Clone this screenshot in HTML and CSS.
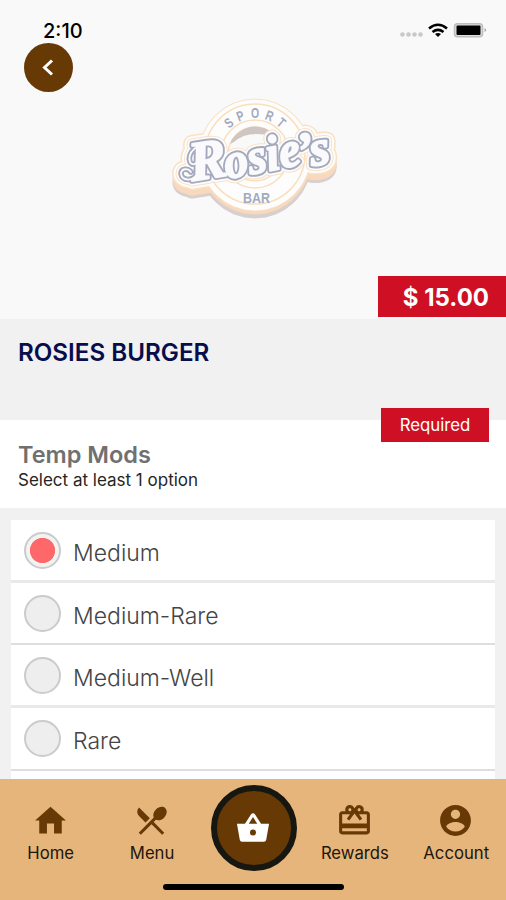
FILE: index.html
```html
<!DOCTYPE html>
<html lang="en">
<head>
<meta charset="utf-8">
<title>Rosies Burger</title>
<link rel="stylesheet" href="styles.css">
</head>
<body>
<div class="screen">
  <header class="hero">
    <div class="status">
      <span class="time">2:10</span>
      <svg class="signals" width="88" height="18" viewBox="0 0 88 18">
        <g fill="#c9c9c9"><circle cx="3.500" cy="11.500" r="2.300"/><circle cx="9.500" cy="11.500" r="2.300"/><circle cx="15.500" cy="11.500" r="2.300"/><circle cx="21.500" cy="11.500" r="2.300"/></g>
        <g fill="none" stroke="#000" stroke-width="2.500"><path d="M30 5.500Q39 -2 48 5.500"/><path d="M33.500 9Q39 4.700 44.500 9"/></g>
        <path d="M36 11Q39 9 42 11L39 14Z"/>
        <rect x="55.500" y="0.800" width="28" height="13" rx="3" fill="#e0e0e0" stroke="#bdbdbd" stroke-width="1.500"/>
        <rect x="57.500" y="2.500" width="24" height="9.500" rx="1"/>
        <path d="M85.500 5Q89 7 85.500 9Z" fill="#aaa"/>
      </svg>
    </div>
    <button class="back" aria-label="Back"><svg width="49" height="49" viewBox="0 0 49 49"><path d="M28 17.500L20.500 24.500L28 31.500" fill="none" stroke="#fff" stroke-width="3"/></svg></button>
    <svg class="logo" width="190" height="145" viewBox="0 0 190 145">
      <defs>
        <g id="name" class="script">
          <text font-size="56" x="32" y="96" transform="rotate(-9 32 96)">R</text>
          <text font-size="50" x="67" y="94" textLength="77" lengthAdjust="spacingAndGlyphs" transform="rotate(-11 67 94)">osie</text>
          <text font-size="50" x="139" y="83" textLength="33" lengthAdjust="spacingAndGlyphs" transform="rotate(-9 139 83)">’s</text>
        </g>
        <path id="flourish" d="M52 59C37 57 27 68 30 77C33 82 38 78 38 73M38 88C32 98 22 95 21 89C21 83 28 83 31 87"/>
      </defs>
      <g class="shadow"><circle cx="95" cy="77" r="56"/><use href="#name" y="9"/><use href="#flourish" y="9"/></g>
      <g class="edge"><circle cx="95" cy="73" r="56"/><use href="#name" y="6"/><use href="#flourish" y="6"/></g>
      <g class="outline"><circle cx="95" cy="70" r="56"/><use href="#name"/><use href="#flourish"/></g>
      <g class="plate"><circle cx="95" cy="70" r="55"/><use href="#name"/><use href="#flourish"/></g>
      <circle class="ring" cx="95" cy="69" r="50"/>
      <circle class="ring" cx="95" cy="69" r="34"/>
      <circle class="hole" cx="95" cy="69" r="27"/>
      <path d="M70 59A27 27 0 0 1 110 46L107 50Q86 46 74 57Z" fill="#cfc5c2"/>
      <g class="small" text-anchor="middle">
        <text transform="rotate(-40 95 69) translate(95 33) scale(.75 1)">S</text>
        <text transform="rotate(-21 95 69) translate(95 33) scale(.75 1)">P</text>
        <text transform="translate(95 33) scale(.75 1)">O</text>
        <text transform="rotate(21 95 69) translate(95 33) scale(.75 1)">R</text>
        <text transform="rotate(40 95 69) translate(95 33) scale(.75 1)">T</text>
      </g>
      <g class="halo-line"><use href="#name"/><use href="#flourish"/></g>
      <g class="halo"><use href="#name"/><use href="#flourish"/></g>
      <g class="line"><use href="#name"/><use href="#flourish"/></g>
      <g class="front"><use href="#name"/><use href="#flourish"/></g>
      <text class="small bar" x="83" y="118" textLength="27" lengthAdjust="spacingAndGlyphs">BAR</text>
    </svg>
    <div class="price">$ 15.00</div>
  </header>
  <section class="item"><h1>ROSIES BURGER</h1></section>
  <section class="group">
    <div class="required">Required</div>
    <h2>Temp Mods</h2>
    <p>Select at least 1 option</p>
  </section>
  <ul class="options">
    <li><span class="radio on"></span><span>Medium</span></li>
    <li><span class="radio"></span><span>Medium-Rare</span></li>
    <li><span class="radio"></span><span>Medium-Well</span></li>
    <li><span class="radio"></span><span>Rare</span></li>
    <li></li>
  </ul>
  <nav class="tabs">
    <a><svg viewBox="0 0 24 24"><path d="M9.700 20.500v-6.500h4.600v6.500h5v-8.500H22L12 3 2 12h2.700v8.500z"/></svg><span>Home</span></a>
    <a><svg viewBox="0 0 24 24"><path d="M8.100 13.340l2.830-2.830L3.910 3.500a4.008 4.008 0 0 0 0 5.660l4.190 4.180zm6.780-1.810c1.530.71 3.680.21 5.270-1.380 1.910-1.910 2.280-4.650.81-6.120-1.460-1.460-4.200-1.100-6.120.81-1.590 1.590-2.090 3.740-1.380 5.270L3.700 19.870l1.410 1.410L12 14.410l6.880 6.880 1.410-1.410L13.410 13l1.470-1.470z"/></svg><span>Menu</span></a>
    <a class="basket" aria-label="Basket"><svg viewBox="0 0 36 32"><path fill-rule="evenodd" d="M1 12H9.500L15.800 2.200Q18 -.3 20.200 2.200L26.500 12H35L32 29Q31.700 31 29.500 31H6.500Q4.300 31 4 29ZM13.500 12H22.500L18 5ZM18 18A3.200 3.200 0 1 0 18 24.400A3.200 3.200 0 1 0 18 18Z"/></svg></a>
    <a><svg viewBox="0 0 24 24"><path d="M20 6h-2.180c.11-.31.18-.65.18-1a2.996 2.996 0 0 0-5.500-1.650l-.5.67-.5-.68C10.960 2.540 10.050 2 9 2 7.340 2 6 3.340 6 5c0 .35.070.69.180 1H4c-1.110 0-1.990.89-1.990 2L2 19c0 1.110.89 2 2 2h16c1.110 0 2-.89 2-2V8c0-1.110-.89-2-2-2zm-5-2c.55 0 1 .45 1 1s-.45 1-1 1-1-.45-1-1 .45-1 1-1zM9 4c.55 0 1 .45 1 1s-.45 1-1 1-1-.45-1-1 .45-1 1-1zm11 15H4v-2h16v2zm0-5H4V8h5.080L7 10.830 8.620 12 11 8.760l1-1.360 1 1.360L15.380 12 17 10.830 14.920 8H20v6z"/></svg><span>Rewards</span></a>
    <a><svg viewBox="0 0 24 24"><path d="M12 2C6.480 2 2 6.480 2 12s4.480 10 10 10 10-4.480 10-10S17.520 2 12 2zm0 3c1.660 0 3 1.340 3 3s-1.340 3-3 3-3-1.340-3-3 1.340-3 3-3zm0 14.200c-2.500 0-4.710-1.280-6-3.220.030-1.990 4-3.080 6-3.080 1.990 0 5.970 1.090 6 3.080-1.290 1.940-3.500 3.220-6 3.220z"/></svg><span>Account</span></a>
    <div class="indicator"></div>
  </nav>
</div>
</body>
</html>
```
FILE: styles.css
```css
* { box-sizing: border-box; }
body { margin: 0; font-family: Inter, "Liberation Sans", sans-serif; }
.screen { width: 506px; height: 900px; display: flex; flex-direction: column; overflow: hidden; background: #f1f1f1; }
.hero { position: relative; flex: 0 0 319px; background: #f9f9f9; }
.status { display: flex; justify-content: space-between; padding: 18px 19px 0 43px; height: 43px; }
.time { font-size: 20px; line-height: 26px; font-weight: 500; }
.signals { margin-top: 5px; }
.back { display: block; width: 49px; height: 49px; margin-left: 24px; padding: 0; border: 0; border-radius: 50%; background: #673a05; }
.logo { position: absolute; left: 160px; top: 85px; }
.price { position: absolute; right: 0; bottom: 2px; width: 128px; height: 41px; padding-right: 17px; background: #cf1024; color: #fff; font-size: 24px; line-height: 43px; font-weight: 700; text-align: right; }
.logo g { stroke-linejoin: round; stroke-linecap: round; }
.script { font-family: "Liberation Serif", serif; font-style: italic; font-weight: bold; }
.shadow { fill: #d8d0cf; stroke: #d8d0cf; stroke-width: 17; }
.edge { fill: #f8d9bd; stroke: #f8d9bd; stroke-width: 17; }
.outline { fill: #fae1c3; stroke: #fae1c3; stroke-width: 18; }
.plate { fill: #fdfdfd; stroke: #fdfdfd; stroke-width: 15; }
.shadow circle, .edge circle, .outline circle, .plate circle { stroke-width: 1; }
#flourish { fill: none; }
.ring { fill: none; stroke: #fadfbd; stroke-width: 1.5; }
.hole { fill: #f9f9f9; stroke: #fadfbd; stroke-width: 1.5; }
.halo-line { fill: #fae1c3; stroke: #fae1c3; stroke-width: 11; }
.halo { fill: #fdfdfd; stroke: #fdfdfd; stroke-width: 9; }
.line { fill: #a4a9bd; stroke: #a4a9bd; stroke-width: 5.6; }
.front { fill: #fafafc; stroke: #fafafc; stroke-width: 1.8; }
.small { font-family: "Liberation Sans", sans-serif; font-size: 14px; font-weight: bold; fill: #a4a9bd; }
.bar { font-size: 15.5px; }
.item { flex: 0 0 101px; padding: 19px 18px; }
h1 { margin: 0; font-size: 24.2px; line-height: 30px; font-weight: 600; color: #080d4c; }
.group { position: relative; flex: 0 0 88px; padding: 20px 18px 0; background: #fff; }
.required { position: absolute; right: 17px; top: -12px; width: 108px; height: 34px; background: #cf1024; color: #fff; font-size: 16.8px; line-height: 35px; text-align: center; }
h2 { margin: 0; font-size: 23.5px; line-height: 30px; font-weight: 600; color: #707070; }
p { margin: 0; font-size: 17px; line-height: 20px; color: #252525; }
.options { flex: 1; min-height: 0; overflow: hidden; margin: 0; padding: 12px 11px 0; list-style: none; }
li { display: flex; gap: 12px; height: 62.7px; padding: 12px 13px 0; background: #fff; border-bottom: 2px solid #dedede; font-size: 23px; line-height: 43px; font-weight: 300; color: #444; }
li:nth-child(odd) { border-bottom: 3px solid #e9e9e9; }
.radio { flex: none; width: 37px; height: 37px; border: 2px solid #cbcbcb; border-radius: 50%; background: #eee; }
.on { background: radial-gradient(circle, #ff686b 12.2px, #f3f3f3 13px); }
.tabs { position: relative; flex: 0 0 121px; display: grid; grid-template-columns: repeat(5, 101.4px); background: #e5b57c; }
.tabs a { display: flex; flex-direction: column; align-items: center; padding-top: 23px; font-size: 16.7px; line-height: 20px; color: #211508; }
.tabs a svg { width: 37px; height: 37px; margin-left: -1px; fill: #673a05; }
.tabs a span { margin-top: 4px; }
.tabs a.basket { width: 86px; height: 86px; margin: 6px 0 0 8px; padding: 21px 0 0; border: 6px solid #171711; border-radius: 50%; background: #673a05; }
.tabs a.basket svg { width: 34px; height: 31px; fill: #fff; }
.indicator { position: absolute; left: 163px; top: 105px; width: 181px; height: 6px; border-radius: 3px; background: #000; }
```
